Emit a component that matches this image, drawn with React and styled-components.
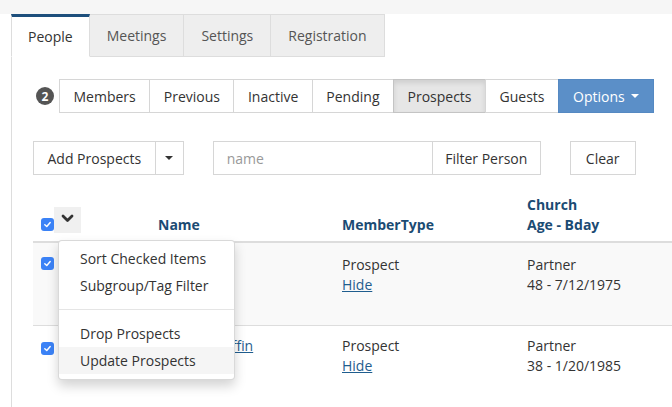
import React from 'react';
import styled, { createGlobalStyle, css } from 'styled-components';

const GlobalStyle = createGlobalStyle`
  body {
    margin: 0;
    background: #fff;
    font-family: "Open Sans", "Noto Sans", sans-serif;
    font-size: 14px;
    color: #333;
  }
  * { box-sizing: border-box; }
`;

const TopStrip = styled.div`
  height: 14px;
  background: #f6f6f6;
`;

const TabBar = styled.div`
  display: flex;
  padding-left: 11px;
`;

const Tab = styled.div`
  height: 43px;
  padding: 0 17px;
  display: flex;
  align-items: center;
  background: #eee;
  color: #555;
  border: 1px solid #ddd;
  border-left-width: 0;
  font-size: 14px;
  ${(p) =>
    p.$active &&
    css`
      background: #fff;
      color: #333;
      padding: 0 16px;
      border-left-width: 1px;
      border-top: 3px solid #1d4f7c;
      border-bottom-color: #fff;
    `}
`;

const Panel = styled.div`
  margin-left: 11px;
  border-left: 1px solid #ddd;
  padding: 22px 0 0 21px;
`;

const FilterRow = styled.div`
  display: flex;
  align-items: center;
  padding-left: 3px;
  gap: 5px;
`;

const Badge = styled.span`
  width: 18px;
  height: 18px;
  border-radius: 50%;
  background: #555;
  color: #fff;
  font-size: 12px;
  font-weight: 700;
  display: flex;
  align-items: center;
  justify-content: center;
`;

const Group = styled.div`
  display: flex;
`;

const Btn = styled.button`
  height: 34px;
  padding: 0 ${(p) => p.$pad || 12}px;
  font-family: inherit;
  font-size: 14px;
  color: #333;
  background: #fff;
  border: 1px solid #d6d6d6;
  margin-left: ${(p) => (p.$joined ? -1 : 0)}px;
  display: flex;
  align-items: center;
  gap: 6px;
  ${(p) =>
    p.$active &&
    css`
      background: #e6e6e6;
      border-color: #c4c4c4;
      box-shadow: inset 0 3px 5px rgba(0, 0, 0, 0.1);
    `}
  ${(p) =>
    p.$primary &&
    css`
      background: #5b8fc8;
      border-color: #5589c2;
      color: #fff;
    `}
`;

const Caret = styled.span`
  width: 0;
  height: 0;
  border-left: 4px solid transparent;
  border-right: 4px solid transparent;
  border-top: 4px solid ${(p) => p.$color || '#333'};
`;

const ActionRow = styled.div`
  display: flex;
  align-items: center;
  margin-top: 28px;
`;

const SearchBox = styled.div`
  display: flex;
  margin-left: 29px;
`;

const Input = styled.input`
  width: 219px;
  height: 34px;
  padding: 0 13px;
  font-family: inherit;
  font-size: 14px;
  border: 1px solid #d6d6d6;
  border-right: 0;
  outline: 0;
  &::placeholder { color: #999; }
`;

const Spacer = styled.div`
  width: 29px;
`;

const Table = styled.div`
  position: relative;
  margin-top: 16px;
`;

const cols = css`
  display: grid;
  grid-template-columns: 117px 184px 185px 1fr;
`;

const HeadRow = styled.div`
  ${cols}
  border-bottom: 2px solid #ddd;
`;

const HeadCell = styled.div`
  padding: 4px 8px 6px;
  align-self: end;
  font-weight: 700;
  color: #1b4b73;
  line-height: 20px;
`;

const SelectCell = styled.div`
  display: flex;
  align-items: flex-end;
  padding: 0 8px 8px;
  align-self: end;
`;

const Check = styled.span`
  width: 13px;
  height: 13px;
  border-radius: 3px;
  background: #3b82f6;
  display: flex;
  align-items: center;
  justify-content: center;
  margin-bottom: ${(p) => p.$mb || 0}px;
  margin-top: ${(p) => p.$mt || 0}px;
`;

const ChevronBtn = styled.div`
  width: 27px;
  height: 26px;
  background: #f0f0f0;
  display: flex;
  align-items: center;
  justify-content: center;
  padding-bottom: 4px;
`;

const BodyRow = styled.div`
  ${cols}
  background: ${(p) => (p.$striped ? '#f9f9f9' : '#fff')};
  border-top: ${(p) => (p.$first ? 0 : '1px solid #ddd')};
`;

const Cell = styled.div`
  padding: ${(p) => (p.$first ? 12 : 10)}px 8px ${(p) => (p.$first ? 30 : 32)}px;
  line-height: 20px;
  color: #333;
  white-space: nowrap;
`;

const Link = styled.a`
  color: #1f5d8e;
  text-decoration: underline;
`;

const Menu = styled.div`
  position: absolute;
  left: 25px;
  top: 49px;
  width: 177px;
  background: #fff;
  border: 1px solid rgba(0, 0, 0, 0.15);
  border-radius: 4px;
  box-shadow: 0 6px 12px rgba(0, 0, 0, 0.175);
  padding: 4px 0 5px;
  z-index: 10;
`;

const MenuItem = styled.div`
  height: 27px;
  line-height: 27px;
  padding: 0 21px;
  color: #333;
  white-space: nowrap;
  background: ${(p) => (p.$hover ? '#f5f5f5' : 'transparent')};
`;

const Divider = styled.div`
  height: 1px;
  margin: 10px 0;
  background: #e5e5e5;
`;

const Tick = () => (
  <svg width="9" height="9" viewBox="0 0 10 10">
    <path d="M2 5.2 L4.2 7.3 L8 2.8" fill="none" stroke="#fff" strokeWidth="1.6" strokeLinecap="round" strokeLinejoin="round" />
  </svg>
);

const Chevron = () => (
  <svg width="13" height="9" viewBox="0 0 13 9">
    <path d="M2 2 L6.5 6.5 L11 2" fill="none" stroke="#333" strokeWidth="2.8" strokeLinecap="round" strokeLinejoin="round" />
  </svg>
);

const statuses = ['Members', 'Previous', 'Inactive', 'Pending', 'Prospects', 'Guests'];

const people = [
  { name: 'Mark Lee', type: 'Prospect', church: 'Partner', bday: '48 - 7/12/1975' },
  { name: 'Michael Griffin', type: 'Prospect', church: 'Partner', bday: '38 - 1/20/1985' },
];

export default function App() {
  return (
    <>
      <GlobalStyle />
      <TopStrip />
      <TabBar>
        <Tab $active>People</Tab>
        <Tab>Meetings</Tab>
        <Tab>Settings</Tab>
        <Tab>Registration</Tab>
      </TabBar>
      <Panel>
        <FilterRow>
          <Badge>2</Badge>
          <Group>
            {statuses.map((s, i) => (
              <Btn key={s} $joined={i > 0} $active={s === 'Prospects'} $pad={13.5}>
                {s}
              </Btn>
            ))}
            <Btn $joined $primary $pad={14}>
              Options <Caret $color="#fff" />
            </Btn>
          </Group>
        </FilterRow>

        <ActionRow>
          <Group>
            <Btn $pad={13.5}>Add Prospects</Btn>
            <Btn $joined $pad={9.5}>
              <Caret />
            </Btn>
          </Group>
          <SearchBox>
            <Input placeholder="name" />
            <Btn $pad={12.5}>Filter Person</Btn>
          </SearchBox>
          <Spacer />
          <Btn $pad={15}>Clear</Btn>
        </ActionRow>

        <Table>
          <HeadRow>
            <SelectCell>
              <Check $mb={2}>
                <Tick />
              </Check>
              <ChevronBtn>
                <Chevron />
              </ChevronBtn>
            </SelectCell>
            <HeadCell>Name</HeadCell>
            <HeadCell>MemberType</HeadCell>
            <HeadCell>
              Church
              <br />
              Age - Bday
            </HeadCell>
          </HeadRow>

          {people.map((p, i) => (
            <BodyRow key={p.name} $striped={i % 2 === 0} $first={i === 0}>
              <Cell $first={i === 0}>
                <Check $mt={i === 0 ? 2 : 6}>
                  <Tick />
                </Check>
              </Cell>
              <Cell $first={i === 0}>
                <Link>{p.name}</Link>
              </Cell>
              <Cell $first={i === 0}>
                {p.type}
                <br />
                <Link>Hide</Link>
              </Cell>
              <Cell $first={i === 0}>
                {p.church}
                <br />
                {p.bday}
              </Cell>
            </BodyRow>
          ))}

          <Menu>
            <MenuItem>Sort Checked Items</MenuItem>
            <MenuItem>Subgroup/Tag Filter</MenuItem>
            <Divider />
            <MenuItem>Drop Prospects</MenuItem>
            <MenuItem $hover>Update Prospects</MenuItem>
          </Menu>
        </Table>
      </Panel>
    </>
  );
}
